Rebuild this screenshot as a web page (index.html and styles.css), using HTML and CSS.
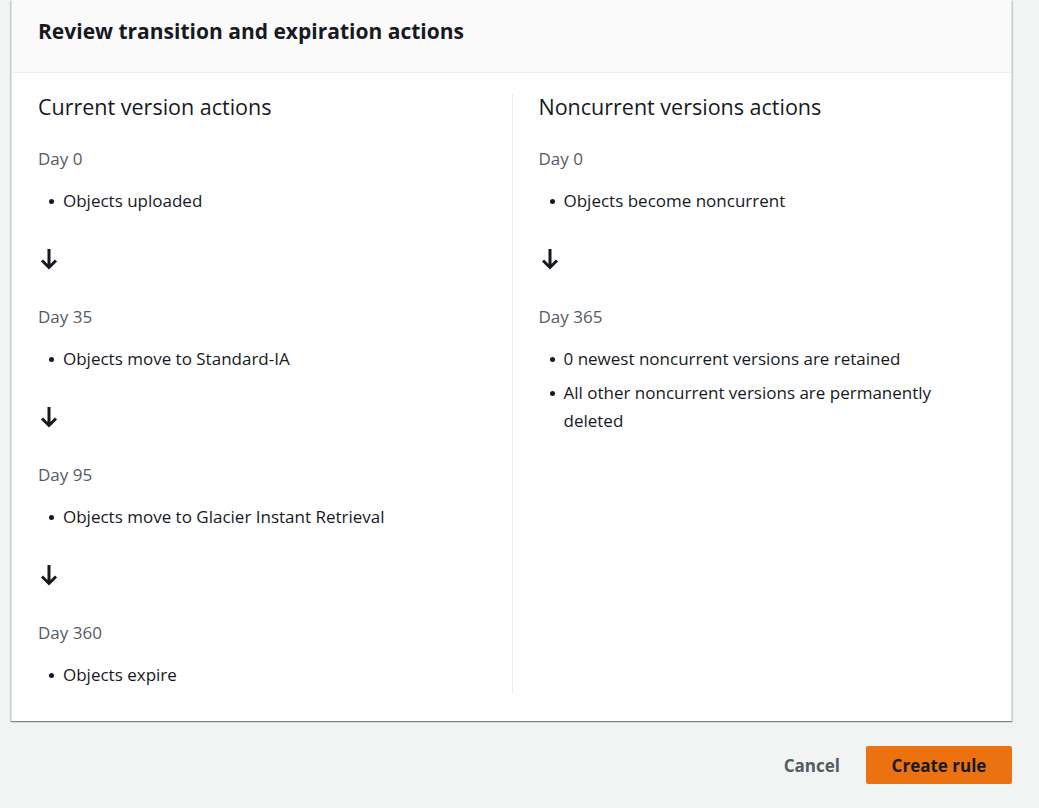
FILE: index.html
```html
<!DOCTYPE html>
<html lang="en">
<head>
<meta charset="utf-8">
<title>Review transition and expiration actions</title>
<link rel="stylesheet" href="styles.css">
</head>
<body>
<div class="page">
  <section class="card">
    <header class="card-header">
      <h2 class="card-title">Review transition and expiration actions</h2>
    </header>
    <div class="card-body">
      <div class="col">
        <h3 class="col-title">Current version actions</h3>
        <div class="day">Day 0</div>
        <ul class="acts"><li>Objects uploaded</li></ul>
        <div class="arrow"><svg width="18" height="22" viewBox="0 0 18 22"><path d="M9 1V19.5M2 12.5L9 19.5 16 12.5" fill="none" stroke="#16191f" stroke-width="3"/></svg></div>
        <div class="day">Day 35</div>
        <ul class="acts"><li>Objects move to Standard-IA</li></ul>
        <div class="arrow"><svg width="18" height="22" viewBox="0 0 18 22"><path d="M9 1V19.5M2 12.5L9 19.5 16 12.5" fill="none" stroke="#16191f" stroke-width="3"/></svg></div>
        <div class="day">Day 95</div>
        <ul class="acts"><li>Objects move to Glacier Instant Retrieval</li></ul>
        <div class="arrow"><svg width="18" height="22" viewBox="0 0 18 22"><path d="M9 1V19.5M2 12.5L9 19.5 16 12.5" fill="none" stroke="#16191f" stroke-width="3"/></svg></div>
        <div class="day">Day 360</div>
        <ul class="acts"><li>Objects expire</li></ul>
      </div>
      <div class="col col-right">
        <h3 class="col-title">Noncurrent versions actions</h3>
        <div class="day">Day 0</div>
        <ul class="acts"><li>Objects become noncurrent</li></ul>
        <div class="arrow"><svg width="18" height="22" viewBox="0 0 18 22"><path d="M9 1V19.5M2 12.5L9 19.5 16 12.5" fill="none" stroke="#16191f" stroke-width="3"/></svg></div>
        <div class="day">Day 365</div>
        <ul class="acts">
          <li>0 newest noncurrent versions are retained</li>
          <li>All other noncurrent versions are permanently deleted</li>
        </ul>
      </div>
    </div>
  </section>
  <div class="actions">
    <button class="btn-link" type="button">Cancel</button>
    <button class="btn-primary" type="button">Create rule</button>
  </div>
</div>
</body>
</html>
```

FILE: styles.css
```css
html, body {
  margin: 0;
  padding: 0;
}
body {
  background: #f2f3f3;
  font-family: "Open Sans", "Noto Sans", sans-serif;
  color: #16191f;
  font-size: 17px;
  line-height: 28px;
}
.page {
  width: 1001px;
  margin-left: 11px;
}
.card {
  background: #fff;
  border-left: 1px solid #e1e4e4;
  border-right: 1px solid #e1e4e4;
  box-shadow: 0 1px 1px 0 rgba(0, 28, 36, 0.35), 1px 1px 1px 0 rgba(0, 28, 36, 0.12), -1px 1px 1px 0 rgba(0, 28, 36, 0.12);
}
.card-header {
  background: #fafafa;
  border-bottom: 1px solid #eaeded;
  height: 73px;
  box-sizing: border-box;
  padding: 17px 26px 0;
}
.card-title {
  margin: 0;
  font-size: 21px;
  line-height: 28px;
  font-weight: 700;
}
.card-body {
  display: grid;
  grid-template-columns: 1fr 1fr;
  padding: 21px 0 27px;
}
.col {
  padding: 0 26px 5px;
}
.col-right {
  border-left: 1px solid #eaeded;
}
.col-title {
  margin: 0;
  font-size: 21.5px;
  line-height: 26px;
  font-weight: 400;
}
.day {
  color: #545b64;
}
.col-title + .day {
  margin-top: 25px;
}
.acts {
  margin: 14px 0 0;
  padding: 0 0 0 25px;
  list-style: none;
}
.acts li {
  position: relative;
}
.acts li::before {
  content: "";
  position: absolute;
  left: -14px;
  top: 12px;
  width: 5px;
  height: 5px;
  border-radius: 50%;
  background: #16191f;
}
.acts li + li {
  margin-top: 6px;
}
.arrow {
  height: 28px;
  margin: 30px 0;
  padding-left: 2px;
  display: flex;
  align-items: center;
}
.arrow svg {
  display: block;
}
.actions {
  display: flex;
  justify-content: flex-end;
  align-items: center;
  gap: 26px;
  margin-top: 25px;
}
.btn-link {
  background: none;
  border: none;
  padding: 0;
  font-family: inherit;
  font-size: 17px;
  font-weight: 700;
  color: #545b64;
  cursor: pointer;
}
.btn-primary {
  background: #ec7211;
  border: none;
  border-radius: 2px;
  width: 146px;
  height: 38px;
  font-family: inherit;
  font-size: 17px;
  font-weight: 700;
  color: #16191f;
  cursor: pointer;
}
```
